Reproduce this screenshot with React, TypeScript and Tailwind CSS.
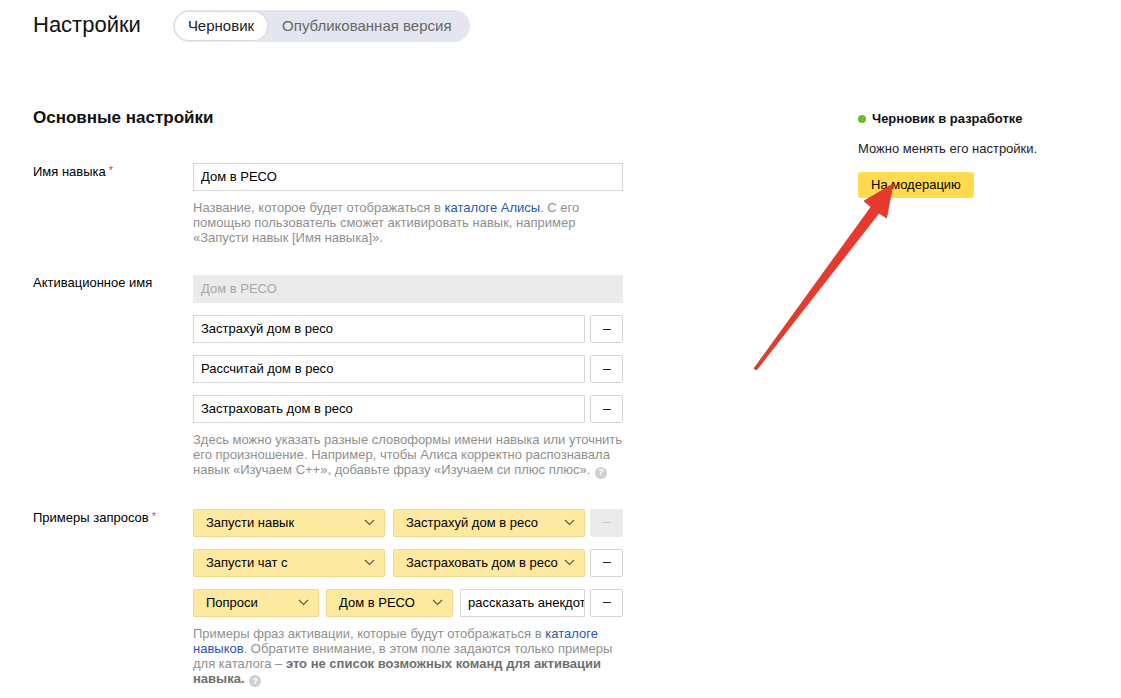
import React from "react";

const font = "font-['Liberation_Sans',Arial,sans-serif]";

function Help() {
  return (
    <span className="inline-flex items-center justify-center w-[12px] h-[12px] rounded-full bg-[#cfcfcf] text-white text-[9px] font-bold align-[-1px] ml-[1px] leading-none">
      ?
    </span>
  );
}

function Minus({ disabled }: { disabled?: boolean }) {
  return (
    <div
      className={
        "w-[33px] h-[28px] shrink-0 rounded-[2px] flex items-center justify-center " +
        (disabled ? "bg-[#ebebeb]" : "bg-white border border-[#d4d4d4]")
      }
    >
      <div className={"w-[8px] h-px " + (disabled ? "bg-[#c4c4c4]" : "bg-[#222]")} />
    </div>
  );
}

function TextBox({ value, className = "" }: { value: string; className?: string }) {
  return (
    <div
      className={
        "h-[28px] border border-[#d6d6d6] bg-white flex items-center pl-[7px] text-[13px] text-black overflow-hidden whitespace-nowrap " +
        className
      }
    >
      {value}
    </div>
  );
}

function Chevron() {
  return (
    <svg width="11" height="7" viewBox="0 0 11 7" className="shrink-0">
      <path d="M1 1l4.5 4.5L10 1" fill="none" stroke="#555" strokeWidth="1.1" />
    </svg>
  );
}

function Select({ value, w }: { value: string; w: string }) {
  return (
    <div
      className={
        "h-[28px] shrink-0 rounded-[2px] bg-[#fde9a0] border border-[#efd98e] flex items-center justify-between pl-[12px] pr-[9px] text-[13px] text-black whitespace-nowrap " +
        w
      }
    >
      <span>{value}</span>
      <Chevron />
    </div>
  );
}

function Label({ text, required }: { text: string; required?: boolean }) {
  return (
    <div className="w-[160px] shrink-0 text-[13px] leading-[15px] text-black">
      {text}
      {required && <span className="text-[#f33] text-[11px] align-[2px] ml-[3px]">*</span>}
    </div>
  );
}

function Hint({ children, className = "" }: { children: React.ReactNode; className?: string }) {
  return (
    <div className={"text-[13px] leading-[15px] text-[#8f8f8f] " + className}>{children}</div>
  );
}

export default function App() {
  return (
    <div className={"relative w-[1121px] h-[698px] bg-white overflow-hidden " + font}>
      <div className="pl-[33px] pt-[10px]">
        <div className="flex items-center h-[32px]">
          <h1 className="text-[22px] text-[#111] leading-none -mt-[3px]">Настройки</h1>
          <div className="ml-[32px] flex items-center h-[32px] rounded-full bg-[#e3e6ee] p-[2px] text-[15px]">
            <div className="h-full flex items-center px-[13px] rounded-full bg-white text-[#222] shadow-[0_0_0_1px_#d9dce5]">
              Черновик
            </div>
            <div className="h-full flex items-center pl-[15px] pr-[16px] text-[#666]">
              Опубликованная версия
            </div>
          </div>
        </div>

        <div className="flex mt-[66px]">
          <div className="w-[590px] shrink-0">
            <h2 className="text-[17px] font-bold leading-[20px] text-[#111]">Основные настройки</h2>

            <div className="flex mt-[35px]">
              <Label text="Имя навыка" required />
              <div className="w-[430px]">
                <TextBox value="Дом в РЕСО" />
                <Hint className="mt-[9px]">
                  Название, которое будет отображаться в{" "}
                  <span className="text-[#2a58ad]">каталоге Алисы</span>. С его помощью
                  пользователь сможет активировать навык, например «Запусти навык [Имя
                  навыка]».
                </Hint>
              </div>
            </div>

            <div className="flex mt-[30px]">
              <Label text="Активационное имя" />
              <div className="w-[430px]">
                <div className="h-[28px] bg-[#ebebeb] flex items-center pl-[8px] text-[13px] text-[#a8a8a8]">
                  Дом в РЕСО
                </div>
                <div className="flex flex-col gap-[12px] mt-[12px]">
                  {["Застрахуй дом в ресо", "Рассчитай дом в ресо", "Застраховать дом в ресо"].map(
                    (v) => (
                      <div key={v} className="flex gap-[5px]">
                        <TextBox value={v} className="flex-1" />
                        <Minus />
                      </div>
                    )
                  )}
                </div>
                <Hint className="mt-[9px]">
                  Здесь можно указать разные словоформы имени навыка или уточнить его
                  произношение. Например, чтобы Алиса корректно распознавала навык «Изучаем
                  С++», добавьте фразу «Изучаем си плюс плюс». <Help />
                </Hint>
              </div>
            </div>

            <div className="flex mt-[30px]">
              <Label text="Примеры запросов" required />
              <div className="w-[430px]">
                <div className="flex flex-col gap-[12px]">
                  <div className="flex">
                    <Select value="Запусти навык" w="w-[192px]" />
                    <div className="ml-[8px]">
                      <Select value="Застрахуй дом в ресо" w="w-[192px]" />
                    </div>
                    <div className="ml-[5px]">
                      <Minus disabled />
                    </div>
                  </div>
                  <div className="flex">
                    <Select value="Запусти чат с" w="w-[192px]" />
                    <div className="ml-[8px]">
                      <Select value="Застраховать дом в ресо" w="w-[192px]" />
                    </div>
                    <div className="ml-[5px]">
                      <Minus />
                    </div>
                  </div>
                  <div className="flex">
                    <Select value="Попроси" w="w-[126px]" />
                    <div className="ml-[7px]">
                      <Select value="Дом в РЕСО" w="w-[127px]" />
                    </div>
                    <TextBox value="рассказать анекдот" className="ml-[7px] w-[125px] text-[13.5px]" />
                    <div className="ml-[5px]">
                      <Minus />
                    </div>
                  </div>
                </div>
                <Hint className="mt-[9px]">
                  Примеры фраз активации, которые будут отображаться в{" "}
                  <span className="text-[#2a58ad]">каталоге навыков</span>. Обратите
                  внимание, в этом поле задаются только примеры для каталога –{" "}
                  <b className="text-[#6f6f6f]">это не список возможных команд для активации навыка.</b>{" "}
                  <Help />
                </Hint>
              </div>
            </div>
          </div>

          <div className="ml-[235px] pt-[3px]">
            <div className="flex items-center text-[13px] leading-[15px] font-bold text-[#111]">
              <span className="w-[8px] h-[8px] rounded-full bg-[#6bbd2a] mr-[6px]" />
              Черновик в разработке
            </div>
            <div className="mt-[15px] text-[13px] leading-[15px] text-[#222]">
              Можно менять его настройки.
            </div>
            <div className="mt-[16px] inline-flex items-center h-[26px] px-[13px] rounded-[3px] bg-[#ffdb4d] text-[13px] text-black">
              На модерацию
            </div>
          </div>
        </div>
      </div>

      <svg
        className="absolute left-0 top-0 pointer-events-none"
        width="1121"
        height="698"
        viewBox="0 0 1121 698"
      >
        <polygon
          points="754,368.5 871,207 864,201 893,184 886.5,218 879,213 756.5,370"
          fill="#e63a2f"
          stroke="#d8302a"
          strokeWidth="0.8"
          strokeLinejoin="round"
        />
      </svg>
    </div>
  );
}
